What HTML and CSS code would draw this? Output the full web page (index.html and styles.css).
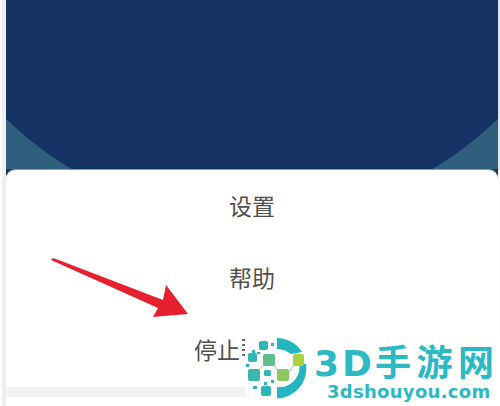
FILE: index.html
```html
<!DOCTYPE html>
<html lang="zh-CN">
<head>
<meta charset="utf-8">
<title>设置菜单</title>
<link rel="stylesheet" href="styles.css">
</head>
<body>
<div class="shot">
  <main class="screen">
    <div class="header"></div>
    <section class="sheet">
      <div class="row">设置</div>
      <div class="row">帮助</div>
      <div class="row row-stop"><span class="stop-text">停止</span><span class="stop-cut"></span></div>
      <div class="band"></div>
    </section>
    <svg class="arrow" viewBox="0 0 140 64" width="140" height="64" aria-hidden="true">
      <path class="arrow-fill" d="M1 6 Q2 3 6 5 L113 46 L116 31 L138 60 L103 63 L108 54 Z"/>
    </svg>
  </main>
  <aside class="logo">
    <svg class="logo-icon" viewBox="244 336 66 66" width="66" height="66" aria-hidden="true">
      <path class="c-arc" d="M277 338 A 30 30 0 0 1 302 352 L297 353 L291 354 A 24 24 0 0 0 277 349 Z"/>
      <path class="c-arc" d="M306 364 A 30 30 0 0 1 277 398.5 L277 387 A 20 20 0 0 0 299.5 366 L299.5 364 Z"/>
      <path class="link" d="M256 372 L266 363 L272 363 L280 373 L288 373 L296 362"/>
      <rect class="c-teal" x="259" y="341" width="9" height="9" rx="2"/>
      <rect class="c-teal" x="248" y="353" width="9" height="9" rx="2"/>
      <rect class="c-green" x="263" y="354" width="12" height="12" rx="2"/>
      <rect class="c-lime" x="293" y="354" width="11" height="12" rx="2"/>
      <rect class="c-sea" x="248" y="369" width="12" height="12" rx="2"/>
      <rect class="c-teal" x="264" y="370" width="7" height="6" rx="1.5"/>
      <rect class="c-leaf" x="277" y="369" width="12" height="12" rx="2"/>
      <rect class="c-teal" x="261" y="386" width="10" height="10" rx="2"/>
      <rect class="c-teal" x="252" y="350" width="3" height="3"/>
      <rect class="c-teal" x="257" y="352" width="3" height="2"/>
      <rect class="c-teal" x="246" y="364" width="3" height="3"/>
      <rect class="c-teal" x="253" y="386" width="4" height="3"/>
      <rect class="c-teal" x="271" y="343" width="3" height="3"/>
      <rect class="c-teal" x="271" y="380" width="3" height="3"/>
      <rect class="c-teal" x="264" y="382" width="3" height="3"/>
    </svg>
    <div class="logo-text">
      <div class="logo-title"><span class="logo-latin">3D</span>手游网</div>
      <div class="logo-url">3dshouyou.com</div>
    </div>
  </aside>
</div>
</body>
</html>
```

FILE: styles.css
```css
html, body {
  margin: 0;
  padding: 0;
}

body {
  width: 500px;
  height: 406px;
  overflow: hidden;
  background: #f5f5f5;
  font-family: "Noto Sans CJK SC", "Noto Sans", sans-serif;
}

.shot {
  position: relative;
  width: 500px;
  height: 406px;
  padding: 0 2px 0 6px;
  box-sizing: border-box;
  background:
    linear-gradient(#dfe6f2, #dfe6f2) right top / 2px 170px no-repeat,
    linear-gradient(to right, #fdfdfd 0, #fdfdfd 2px, #efefef 2px, #efefef 6px, #fdfdfd 6px);
}

.screen {
  position: relative;
  display: flex;
  flex-direction: column;
  height: 406px;
  background: #1b3556;
}

.header {
  height: 169px;
  flex: none;
  background: radial-gradient(circle 354px at 246px -135px, #143263 99.7%, #2f5f7c 100%);
}

.sheet {
  flex: 1;
  display: flex;
  flex-direction: column;
  margin-top: 1px;
  padding-top: 1px;
  background: #fff;
  border-radius: 9px 9px 0 0;
  box-shadow: 0 -1px 0 #7d9ac2;
}

.row {
  height: 72px;
  flex: none;
  box-sizing: border-box;
  padding-bottom: 4px;
  display: flex;
  align-items: center;
  justify-content: center;
  font-size: 23px;
  color: #505050;
}

.row-stop {
  justify-content: flex-start;
  padding-left: 188px;
}

.stop-cut {
  width: 3px;
  height: 20px;
  margin-left: 2px;
  background: repeating-linear-gradient(to bottom, #666 0, #666 2px, transparent 2px, transparent 5px);
}

.band {
  height: 10px;
  margin-left: 1px;
  background: #f2f2f2;
}

.arrow {
  position: absolute;
  left: 44px;
  top: 254px;
}

.arrow-fill {
  fill: #e6202e;
}

.logo {
  position: absolute;
  left: 246px;
  top: 336px;
  width: 254px;
  height: 70px;
  display: flex;
  background: #fff;
}

.logo-icon {
  flex: none;
  margin-left: -2px;
}

.logo-text {
  display: flex;
  flex-direction: column;
  align-items: center;
  margin-left: 4px;
  padding-top: 3px;
}

.logo-title {
  height: 44px;
  font-size: 36px;
  font-weight: 700;
  line-height: 42px;
  letter-spacing: 5.5px;
  color: #2bb9c3;
  white-space: nowrap;
}

.logo-latin {
  font-family: "DejaVu Sans", sans-serif;
  letter-spacing: 3px;
}

.logo-url {
  margin-left: 4px;
  font-family: "DejaVu Sans", sans-serif;
  font-size: 18px;
  font-weight: 700;
  line-height: 18px;
  letter-spacing: 0.3px;
  color: #2bb9c3;
  white-space: nowrap;
}

.link {
  fill: none;
  stroke: #8fd0c8;
  stroke-width: 1;
}

.c-arc { fill: #25b5c0; }
.c-teal { fill: #2db5b9; }
.c-sea { fill: #3db8a8; }
.c-green { fill: #5cc08a; }
.c-leaf { fill: #8cc860; }
.c-lime { fill: #a9d23f; }
```
